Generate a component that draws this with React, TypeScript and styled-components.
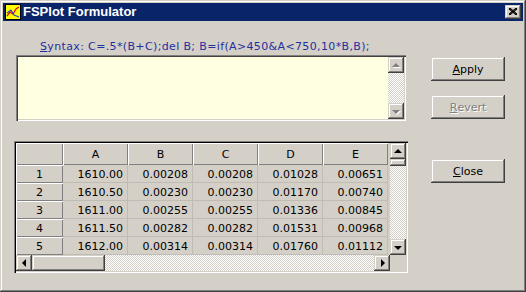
import * as React from "react"
import styled, { createGlobalStyle, css } from "styled-components"

const columns = ["A", "B", "C", "D", "E"]

const rows = [
  ["1610.00", "0.00208", "0.00208", "0.01028", "0.00651"],
  ["1610.50", "0.00230", "0.00230", "0.01170", "0.00740"],
  ["1611.00", "0.00255", "0.00255", "0.01336", "0.00845"],
  ["1611.50", "0.00282", "0.00282", "0.01531", "0.00968"],
  ["1612.00", "0.00314", "0.00314", "0.01760", "0.01112"],
]

type Dir = "up" | "down" | "left" | "right"

const App = () => (
  <>
    <GlobalStyle />
    <Window>
      <TitleBar>
        <AppIcon viewBox="0 0 16 16" width="16" height="16">
          <rect x="0.5" y="0.5" width="15" height="15" fill="#ffff00" stroke="#000" />
          <polyline points="2,12 5,8 8,10 11,5 14,3" fill="none" stroke="#e01010" strokeWidth="1.3" />
          <polyline points="2,9 6,6 9,11 14,13" fill="none" stroke="#2040e0" strokeWidth="1.1" />
        </AppIcon>
        <Title>FSPlot Formulator</Title>
        <CloseBox>
          <svg viewBox="0 0 8 7" width="8" height="7">
            <path d="M0 0 L8 7 M1 0 L8 6 M0 1 L7 7 M8 0 L0 7 M7 0 L0 6 M8 1 L1 7" stroke="#000" strokeWidth="1" />
          </svg>
        </CloseBox>
      </TitleBar>

      <Body>
        <LeftColumn>
          <Label>
            <u>S</u>yntax: C=.5*(B+C);del B; B=if(A&gt;450&amp;A&lt;750,10*B,B);
          </Label>

          <Editor>
            <VScroll>
              <ScrollButton>
                <Arrow $dir="up" $disabled />
              </ScrollButton>
              <Track />
              <ScrollButton>
                <Arrow $dir="down" $disabled />
              </ScrollButton>
            </VScroll>
          </Editor>

          <GridFrame>
            <Sheet>
              <HeadCell />
              {columns.map((c) => (
                <HeadCell key={c}>{c}</HeadCell>
              ))}
              {rows.map((r, i) => (
                <React.Fragment key={i}>
                  <HeadCell>{i + 1}</HeadCell>
                  {r.map((v, j) => (
                    <DataCell key={j}>{v}</DataCell>
                  ))}
                </React.Fragment>
              ))}
            </Sheet>
            <VScroll>
              <ScrollButton>
                <Arrow $dir="up" />
              </ScrollButton>
              <Thumb $vertical />
              <Track />
              <ScrollButton>
                <Arrow $dir="down" />
              </ScrollButton>
            </VScroll>
            <HScroll>
              <ScrollButton>
                <Arrow $dir="left" />
              </ScrollButton>
              <Thumb />
              <Track />
              <ScrollButton>
                <Arrow $dir="right" />
              </ScrollButton>
            </HScroll>
            <Corner />
          </GridFrame>
        </LeftColumn>

        <ButtonColumn>
          <Button>
            <u>A</u>pply
          </Button>
          <Button $disabled>
            <u>R</u>evert
          </Button>
          <Button $gap>
            <u>C</u>lose
          </Button>
        </ButtonColumn>
      </Body>
    </Window>
  </>
)

export default App

const face = "#d4d0c8"

const raised = css`
  background: ${face};
  box-shadow: inset -1px -1px #404040, inset 1px 1px ${face},
    inset -2px -2px #808080, inset 2px 2px #ffffff;
`

const GlobalStyle = createGlobalStyle`
  html, body {
    margin: 0;
    padding: 0;
    background: ${face};
  }
`

const Window = styled.div`
  width: 526px;
  height: 292px;
  box-sizing: border-box;
  padding: 3px;
  display: flex;
  flex-direction: column;
  background: ${face};
  box-shadow: inset -1px -1px #404040, inset 1px 1px ${face},
    inset -2px -2px #808080, inset 2px 2px #ffffff;
  font-family: "DejaVu Sans", Verdana, sans-serif;
  font-size: 11px;
  color: #000;
`

const TitleBar = styled.div`
  height: 18px;
  flex: none;
  display: flex;
  align-items: center;
  gap: 2px;
  padding: 0 2px;
  background: #0a246a;
`

const AppIcon = styled.svg`
  display: block;
  flex: none;
`

const Title = styled.div`
  flex: 1;
  font-family: "Liberation Sans", Arial, sans-serif;
  font-weight: bold;
  font-size: 13px;
  color: #fff;
  line-height: 18px;
`

const CloseBox = styled.div`
  ${raised};
  width: 16px;
  height: 14px;
  box-sizing: border-box;
  display: flex;
  align-items: center;
  justify-content: center;
  padding: 0 0 1px 0;
`

const Body = styled.div`
  flex: 1;
  display: grid;
  grid-template-columns: 394px 74px;
  column-gap: 23px;
  align-items: start;
  padding: 19px 0 0 11px;
`

const LeftColumn = styled.div`
  display: flex;
  flex-direction: column;
`

const Label = styled.div`
  margin-left: 26px;
  line-height: 14px;
  letter-spacing: 0.36px;
  color: #1f2f9f;
  white-space: nowrap;
`

const Editor = styled.div`
  margin: 1px 0 0 2px;
  width: 390px;
  height: 66px;
  box-sizing: border-box;
  padding: 2px;
  display: flex;
  justify-content: flex-end;
  background: #ffffe1;
  box-shadow: inset 1px 1px #808080, inset 2px 2px #404040,
    inset -1px -1px #ffffff, inset -2px -2px ${face};
`

const VScroll = styled.div`
  width: 16px;
  display: flex;
  flex-direction: column;
`

const HScroll = styled.div`
  height: 16px;
  display: flex;
`

const ScrollButton = styled.div`
  ${raised};
  width: 16px;
  height: 16px;
  flex: none;
  box-sizing: border-box;
  display: flex;
  align-items: center;
  justify-content: center;
`

const Thumb = styled.div<{ $vertical?: boolean }>`
  ${raised};
  flex: none;
  ${(p) => (p.$vertical ? "height: 7px;" : "width: 73px;")}
`

const Track = styled.div`
  flex: 1;
  background: repeating-conic-gradient(#ffffff 0% 25%, ${face} 0% 50%) 0 0 / 2px 2px;
`

const Corner = styled.div`
  background: ${face};
`

const arrowShape = (dir: Dir, color: string) => {
  switch (dir) {
    case "up":
      return `border-left: 4px solid transparent; border-right: 4px solid transparent; border-bottom: 4px solid ${color}; margin-top: -1px;`
    case "down":
      return `border-left: 4px solid transparent; border-right: 4px solid transparent; border-top: 4px solid ${color}; margin-top: 1px;`
    case "left":
      return `border-top: 4px solid transparent; border-bottom: 4px solid transparent; border-right: 4px solid ${color}; margin-left: -1px;`
    default:
      return `border-top: 4px solid transparent; border-bottom: 4px solid transparent; border-left: 4px solid ${color}; margin-left: 1px;`
  }
}

const Arrow = styled.span<{ $dir: Dir; $disabled?: boolean }>`
  width: 0;
  height: 0;
  ${(p) => arrowShape(p.$dir, p.$disabled ? "#808080" : "#000")}
  ${(p) => p.$disabled && "filter: drop-shadow(1px 1px 0 #fff);"}
`

const GridFrame = styled.div`
  margin-top: 20px;
  width: 394px;
  height: 132px;
  box-sizing: border-box;
  padding: 2px;
  display: grid;
  grid-template-columns: 1fr 16px;
  grid-template-rows: 1fr 16px;
  background: ${face};
  box-shadow: inset 1px 1px #808080, inset 2px 2px #000000,
    inset -1px -1px #ffffff, inset -2px -2px ${face};
`

const Sheet = styled.div`
  display: grid;
  grid-template-columns: 47px repeat(5, 65px);
  grid-template-rows: 22px repeat(5, 18px);
  align-content: start;
`

const HeadCell = styled.div`
  display: flex;
  align-items: center;
  justify-content: center;
  background: ${face};
  box-shadow: inset 1px 1px #ffffff, inset -1px -1px #808080;
`

const DataCell = styled.div`
  display: flex;
  align-items: center;
  justify-content: flex-end;
  padding: 1px 4px 0 0;
  background: ${face};
  border-right: 1px solid #c0bcb4;
  border-bottom: 1px solid #c0bcb4;
`

const ButtonColumn = styled.div`
  display: flex;
  flex-direction: column;
  gap: 14px;
  padding-top: 17px;
`

const Button = styled.div<{ $disabled?: boolean; $gap?: boolean }>`
  ${raised};
  height: 24px;
  display: flex;
  align-items: center;
  justify-content: center;
  padding-top: 1px;
  box-sizing: border-box;
  ${(p) => p.$gap && "margin-top: 26px;"}
  ${(p) =>
    p.$disabled &&
    css`
      color: #808080;
      text-shadow: 1px 1px 0 #ffffff;
    `}
`
